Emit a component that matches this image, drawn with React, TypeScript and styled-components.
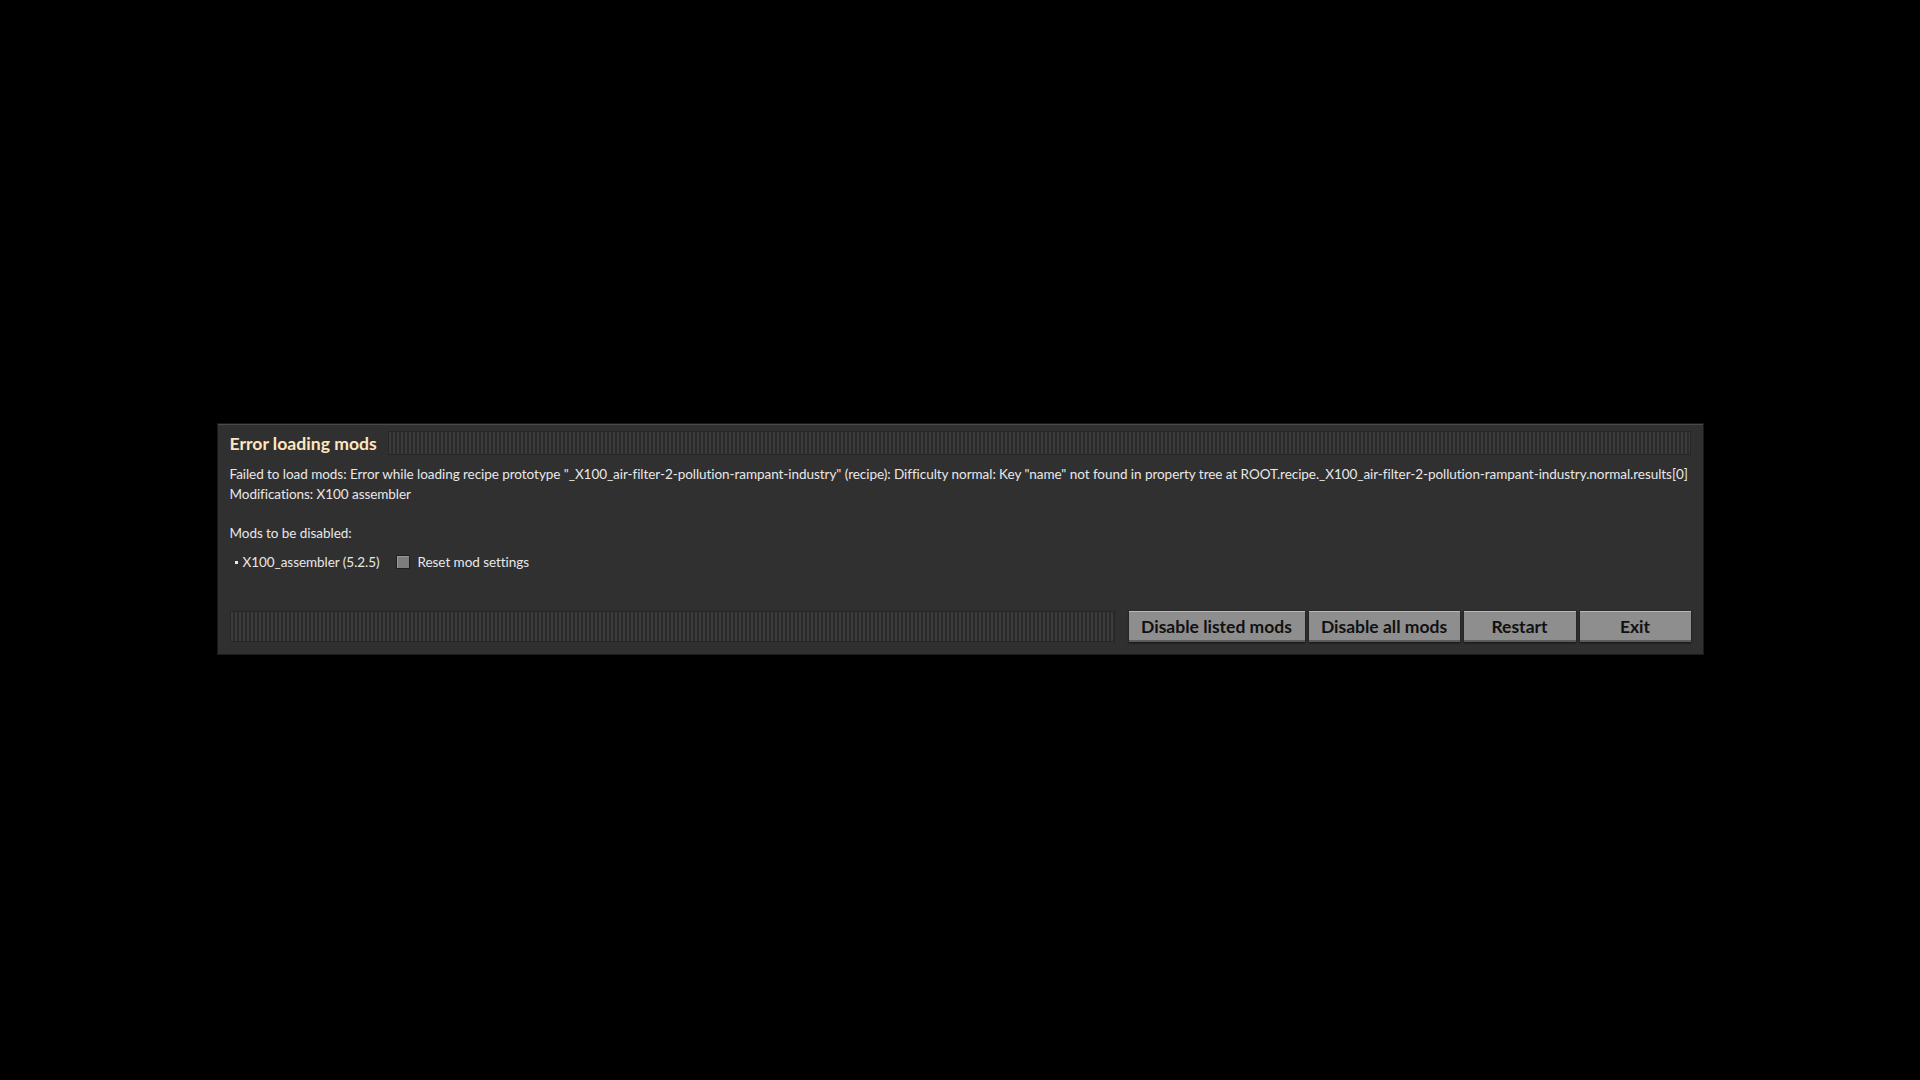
import styled, { createGlobalStyle } from 'styled-components';

const GlobalStyle = createGlobalStyle`
  html, body {
    margin: 0;
    padding: 0;
    background: #000;
  }
  #root {
    min-height: 100vh;
  }
`;

const FONT = `Lato, "Noto Sans", sans-serif`;

const Screen = styled('div')`
  height: 100vh;
  box-sizing: border-box;
  padding-bottom: 2px;
  display: flex;
  align-items: center;
  justify-content: center;
  font-family: ${FONT};
`;

const Frame = styled('section')`
  width: 1485px;
  box-sizing: border-box;
  background: #313031;
  border-top: 1px solid #4a4a4a;
  box-shadow: 0 0 0 1px #1a1a1a;
  padding: 6px 12px 12px 12px;
  display: flex;
  flex-direction: column;
`;

const TitleBar = styled('header')`
  display: flex;
  align-items: center;
  gap: 11px;
  height: 24px;
`;

const Title = styled('h1')`
  margin: 0;
  font-size: 17.6px;
  font-weight: 700;
  color: #ffe6c0;
  white-space: nowrap;
`;

const DragArea = styled('div')<{ $height: number }>`
  flex: 1;
  height: ${(p) => p.$height}px;
  box-sizing: border-box;
  border: 1px solid #272627;
  background: repeating-linear-gradient(
    90deg,
    #3d3c3d 0 2px,
    #2c2b2c 2px 4px
  );
`;

const Text = styled('p')<{ $gap?: number }>`
  margin: ${(p) => p.$gap ?? 0}px 0 0 0;
  font-size: 13.5px;
  letter-spacing: -0.05px;
  line-height: 20px;
  color: #e8e8e8;
  white-space: nowrap;
`;

const ModRow = styled('div')`
  margin-top: 9px;
  height: 20px;
  display: flex;
  align-items: center;
  font-size: 13.5px;
  letter-spacing: -0.05px;
  color: #e8e8e8;
`;

const Bullet = styled('span')`
  width: 3px;
  height: 3px;
  background: #e8e8e8;
  margin: 0 5px 0 5px;
`;

const Check = styled('span')`
  width: 14px;
  height: 14px;
  box-sizing: border-box;
  margin: 0 8px 0 16px;
  background: #7d7d7d;
  border: 1px solid #1f1f1f;
  box-shadow: inset 1px 1px 0 #999;
`;

const Footer = styled('footer')`
  margin-top: 39px;
  display: flex;
  align-items: center;
`;

const Buttons = styled('div')`
  display: flex;
  gap: 4px;
  margin-left: 14px;
`;

const Button = styled('button')<{ $width: number }>`
  width: ${(p) => p.$width}px;
  height: 31px;
  box-sizing: border-box;
  border: none;
  background: #8e8e8e;
  box-shadow: inset 0 1px 0 #b8b8b8, inset 0 -2px 0 #5c5c5c, 0 1px 2px #111;
  font-family: ${FONT};
  font-size: 17.5px;
  font-weight: 700;
  color: #111;
  padding: 0;
`;

const LONG =
  'Failed to load mods: Error while loading recipe prototype "_X100_air-filter-2-pollution-rampant-industry" (recipe): Difficulty normal: Key "name" not found in property tree at ROOT.recipe._X100_air-filter-2-pollution-rampant-industry.normal.results[0]';

const App = () => {
  return (
    <Screen>
      <GlobalStyle />
      <Frame>
        <TitleBar>
          <Title>Error loading mods</Title>
          <DragArea $height={24} />
        </TitleBar>
        <Text $gap={9}>{LONG}</Text>
        <Text>Modifications: X100 assembler</Text>
        <Text $gap={19}>Mods to be disabled:</Text>
        <ModRow>
          <Bullet />
          X100_assembler (5.2.5)
          <Check />
          Reset mod settings
        </ModRow>
        <Footer>
          <DragArea $height={31} />
          <Buttons>
            <Button $width={176}>Disable listed mods</Button>
            <Button $width={151}>Disable all mods</Button>
            <Button $width={112}>Restart</Button>
            <Button $width={111}>Exit</Button>
          </Buttons>
        </Footer>
      </Frame>
    </Screen>
  );
};

export default App;
